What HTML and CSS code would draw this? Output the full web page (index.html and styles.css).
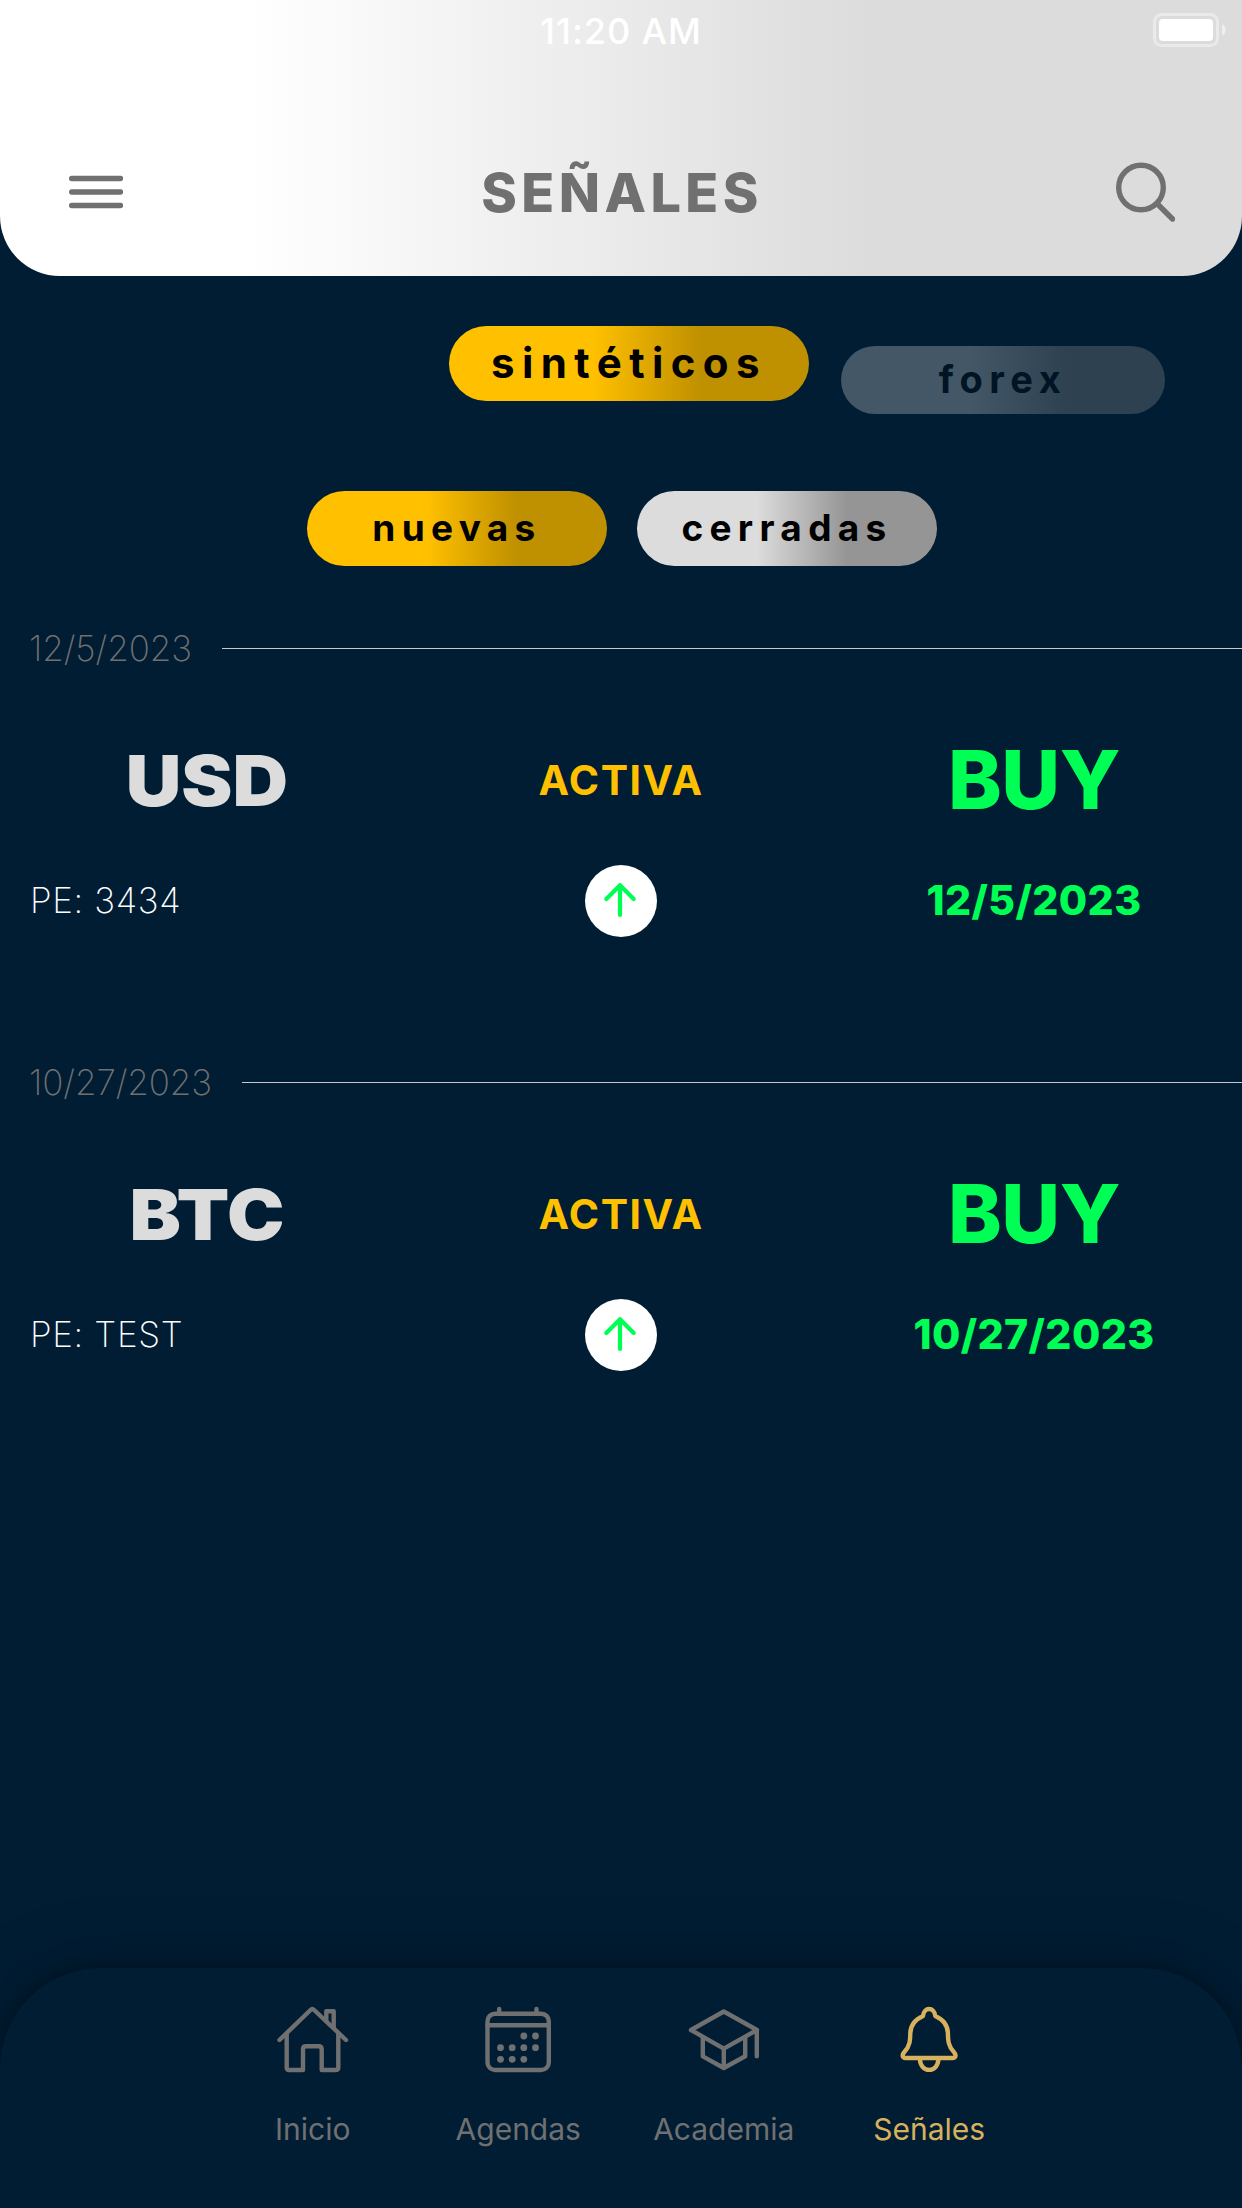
FILE: index.html
```html
<!DOCTYPE html>
<html lang="es">
<head>
    <meta charset="UTF-8">
    <meta name="viewport" content="width=device-width, initial-scale=1.0">
    <title>Señales</title>
    <link rel="stylesheet" href="styles.css">
</head>
<body>
    <header class="header">
        <div class="status-bar">
            <span class="time">11:20 AM</span>
            <svg class="battery" width="73" height="34" viewBox="0 0 73 34">
                <rect x="1.5" y="1.5" width="63" height="31" rx="7" fill="none" stroke="#fff" stroke-opacity="0.4" stroke-width="3"/>
                <rect x="6" y="6" width="54" height="22" rx="4" fill="#fff"/>
                <path d="M69 11c5 2.500 5 9.500 0 12z" fill="#fff" fill-opacity="0.5"/>
            </svg>
        </div>
        <div class="nav">
            <svg class="menu-icon" width="54" height="34" viewBox="0 0 54 34">
                <path d="M2.700 3.500h48.800M2.700 17h48.800M2.700 30.500h48.800"/>
            </svg>
            <h1>SEÑALES</h1>
            <svg class="search-icon" width="59" height="60" viewBox="0 0 59 60">
                <circle cx="25" cy="25.500" r="22.300"/>
                <path d="M41.500 42l15 15"/>
            </svg>
        </div>
    </header>

    <div class="markets">
        <button class="pill gold active">sintéticos</button>
        <button class="pill gray inactive">forex</button>
    </div>
    <div class="filters">
        <button class="pill gold">nuevas</button>
        <button class="pill gray">cerradas</button>
    </div>

    <main class="signals">
        <section class="signal">
            <div class="day"><span>12/5/2023</span></div>
            <div class="row main-row">
                <div class="pair">USD</div>
                <div class="state">ACTIVA</div>
                <div class="action">BUY</div>
            </div>
            <div class="row info-row">
                <div class="price">PE: 3434</div>
                <div class="arrow">
                    <svg width="72" height="72" viewBox="0 0 72 72"><path d="M35 50V20M21.300 34L35 20.300L48.700 34"/></svg>
                </div>
                <div class="date">12/5/2023</div>
            </div>
        </section>
        <section class="signal">
            <div class="day"><span>10/27/2023</span></div>
            <div class="row main-row">
                <div class="pair">BTC</div>
                <div class="state">ACTIVA</div>
                <div class="action">BUY</div>
            </div>
            <div class="row info-row">
                <div class="price">PE: TEST</div>
                <div class="arrow">
                    <svg width="72" height="72" viewBox="0 0 72 72"><path d="M35 50V20M21.300 34L35 20.300L48.700 34"/></svg>
                </div>
                <div class="date">10/27/2023</div>
            </div>
        </section>
    </main>

    <nav class="tab-bar">
        <a class="tab">
            <svg width="74" height="72" viewBox="0 0 74 72">
                <path d="M3.500 36L34.500 6Q36.300 4.300 38.100 6L70 36"/>
                <path d="M10.700 30V63.500Q10.700 66 13.200 66H27V45.500Q27 42.300 30 42.300H42.700Q45.700 42.300 45.700 45.500V66H59.500Q62.300 66 62.300 63.500V30"/>
                <path d="M50.300 17V7.300H57.700V24"/>
            </svg>
            <span>Inicio</span>
        </a>
        <a class="tab">
            <svg width="74" height="72" viewBox="0 0 74 72">
                <rect x="6.500" y="9.700" width="61.300" height="56.300" rx="7.500"/>
                <path d="M6.500 21.300H67.800M18.200 5V9M55.500 5V9"/>
                <g class="dots">
                    <circle cx="42.800" cy="32" r="3.400"/><circle cx="54.500" cy="32" r="3.400"/>
                    <circle cx="19.500" cy="43.700" r="3.400"/><circle cx="31.200" cy="43.700" r="3.400"/><circle cx="42.800" cy="43.700" r="3.400"/><circle cx="54.500" cy="43.700" r="3.400"/>
                    <circle cx="19.500" cy="55.300" r="3.400"/><circle cx="31.200" cy="55.300" r="3.400"/><circle cx="42.800" cy="55.300" r="3.400"/>
                </g>
            </svg>
            <span>Agendas</span>
        </a>
        <a class="tab">
            <svg width="74" height="72" viewBox="0 0 74 72">
                <path d="M4 26L36.800 7.500L70 26L36.800 44.700ZM69.800 26V52.300"/>
                <path d="M15.800 33V52.300L36.800 64L58.200 52.300V33M36.800 44.700V64"/>
            </svg>
            <span>Academia</span>
        </a>
        <a class="tab selected">
            <svg width="74" height="72" viewBox="0 0 74 72">
                <path d="M31 12C32 2.700 42.200 2.700 43.300 12C51 15.500 55.600 20 55.900 29C56 37 56.500 42 61.500 47.500C65 51.500 63.500 54 60.500 54H13.700C10.700 54 9.200 51.500 12.700 47.500C17.700 42 18.200 37 18.300 29C18.600 20 23.300 15.500 31 12Z"/>
                <path d="M27.900 55C28.300 69.500 46 69.500 46.400 55"/>
            </svg>
            <span>Señales</span>
        </a>
    </nav>
</body>
</html>
```
FILE: styles.css
```css
* {
    box-sizing: border-box;
}
body {
    margin: 0;
    height: 2208px;
    display: flex;
    flex-direction: column;
    background: #001d34;
    color: white;
    font-family: Inter, "Liberation Sans", sans-serif;
    overflow: hidden;
}
svg {
    display: block;
    fill: none;
    stroke-linecap: round;
    stroke-linejoin: round;
}

/* header */
.header {
    height: 276px;
    border-radius: 0 0 60px 60px;
    background: linear-gradient(to right, #fff 20%, #dcdcdc 70%);
}
.status-bar {
    height: 62px;
    padding-right: 16px;
    padding-left: 16px;
    display: grid;
    grid-template-columns: 1fr auto 1fr;
    align-items: center;
}
.time {
    grid-column: 2;
    font-size: 36px;
    font-weight: 500;
    letter-spacing: 0.95px;
}
.battery {
    justify-self: end;
    margin-bottom: 2px;
}
.nav {
    height: 132px;
    margin-top: 65px;
    padding: 0 67px 0 69px;
    display: grid;
    grid-template-columns: 1fr auto 1fr;
    align-items: center;
    color: #707070;
}
.nav svg {
    stroke: #707070;
    margin-bottom: 2px;
}
.nav h1 {
    margin: 0;
    font-size: 54px;
    font-weight: 800;
    line-height: 60px;
    letter-spacing: 4.4px;
}
.menu-icon {
    stroke-width: 5.4px;
}
.search-icon {
    justify-self: end;
    stroke-width: 5.4px;
}

/* buttons */
.pill {
    width: 300px;
    height: 75px;
    padding: 0 0 2px;
    border: none;
    border-radius: 38px;
    color: black;
    font-family: inherit;
    font-size: 37px;
    font-weight: 700;
    line-height: 73px;
    letter-spacing: 6.3px;
}
.gold {
    background: linear-gradient(to right, #ffc000 40%, #bf9000 70%);
}
.gray {
    background: linear-gradient(to right, #dcdcdc 40%, #959595 70%);
}
.markets {
    height: 88px;
    margin-top: 50px;
    padding-left: 449px;
    display: flex;
    align-items: flex-start;
    gap: 32px;
}
.pill.active {
    width: 360px;
    font-size: 42px;
    letter-spacing: 7.4px;
}
.pill.inactive {
    width: 324px;
    height: 68px;
    margin-top: 20px;
    font-size: 38px;
    line-height: 66px;
    letter-spacing: 6.5px;
    opacity: 0.3;
}
.filters {
    margin-top: 77px;
    padding-left: 2px;
    display: flex;
    justify-content: center;
    gap: 30px;
}

/* signals */
.signals {
    margin-top: 60px;
}
.signal {
    margin-bottom: 123px;
}
.day {
    height: 44px;
    padding-left: 29px;
    display: flex;
    align-items: center;
    gap: 30px;
    color: #707070;
    font-size: 35px;
    font-weight: 200;
    letter-spacing: -0.1px;
}
.day::after {
    content: "";
    flex: 1;
    height: 1px;
    margin-top: 1px;
    background: #c8c7cc;
}
.row {
    display: grid;
    grid-template-columns: repeat(3, 1fr);
    align-items: center;
    text-align: center;
}
.main-row {
    height: 99px;
    margin-top: 61px;
}
.pair {
    color: #dcdcdc;
    font-size: 70px;
    font-weight: 900;
    transform: scaleX(1.1);
}
.state {
    padding-bottom: 2px;
    color: #ffc000;
    font-size: 41px;
    font-weight: 700;
    letter-spacing: 1.5px;
}
.action {
    padding-right: 2px;
    color: #00ff55;
    font-size: 81px;
    font-weight: 800;
    line-height: 99px;
    letter-spacing: -0.5px;
}
.info-row {
    height: 72px;
    margin-top: 35px;
}
.price {
    padding-left: 30px;
    padding-bottom: 2px;
    text-align: left;
    font-size: 35px;
    font-weight: 200;
    letter-spacing: 0.65px;
}
.arrow {
    width: 72px;
    height: 72px;
    justify-self: center;
    border-radius: 50%;
    background: white;
}
.arrow svg {
    stroke: #00ff55;
    stroke-width: 4.2px;
}
.date {
    padding-right: 2px;
    padding-bottom: 2px;
    color: #00ff55;
    font-size: 41px;
    font-weight: 800;
    letter-spacing: 0.4px;
}

/* tab bar */
.tab-bar {
    height: 240px;
    margin-top: auto;
    padding: 36px 210px 0;
    display: flex;
    border-radius: 100px 100px 0 0;
    background: #001d34;
    box-shadow: 0 0 16px rgba(0, 0, 0, 0.35), 0 0 70px rgba(0, 0, 0, 0.25);
}
.tab {
    flex: 1;
    display: flex;
    flex-direction: column;
    align-items: center;
    gap: 33px;
    color: #707070;
    font-size: 30px;
    line-height: 40px;
}
.tab svg {
    stroke: currentColor;
    stroke-width: 4.4px;
}
.dots {
    fill: currentColor;
    stroke: none;
}
.selected {
    color: #d8b15c;
}
```
